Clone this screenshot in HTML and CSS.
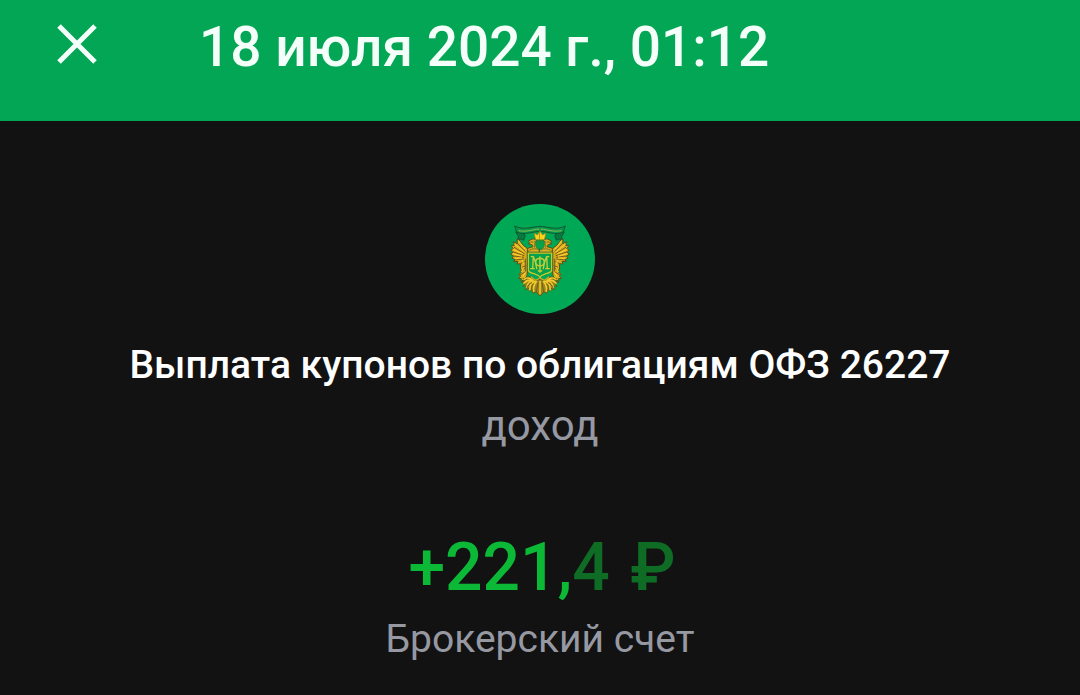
FILE: index.html
```html
<!DOCTYPE html>
<html lang="ru">
<head>
<meta charset="utf-8">
<meta name="viewport" content="width=device-width, initial-scale=1">
<title>Выплата купонов</title>
<link rel="stylesheet" href="styles.css">
</head>
<body>
<header class="topbar">
  <button class="close" type="button" aria-label="Закрыть">
    <svg class="close-icon" viewBox="0 0 40 40" aria-hidden="true"><path d="M2 2 38 38M38 2 2 38"/></svg>
  </button>
  <h1 class="topbar-title">18 июля 2024 г., 01:12</h1>
</header>
<main class="operation">
  <svg class="emblem" viewBox="15 12 330 330" role="img" aria-label="Герб">
    <circle cx="180" cy="177" r="165" fill="#00a855"/>
    <defs>
      <g id="half" stroke-linejoin="round" stroke-linecap="round">
        <path d="M108 96l14 0 14 10-5 15-9-4-11 6 4-12z" fill="#087a3f" stroke="#0a5931" stroke-width="3"/>
        <path d="M181 79C157 79 131 92 104 78l6 18c25 12 46-3 71-1" fill="#07964c" stroke="#0f5a30" stroke-width="3"/>
        <path d="M117 92c23 5 40-4 63-5" fill="none" stroke="#78b84e" stroke-width="4" stroke-dasharray="4 4"/>
        <path d="M144 155c1-10-5-13-14-18l-13-18-6-1 1 13-12-6 3 11-9 1 6 10-8 3 7 8-7 4 9 7-6 6 11 3-5 7 13-1-3 8 11-1-1 13 4 12-8 7 5 5-7 7 9 1-1 9 7-5 8-6 3-8z" fill="#d9ad20" stroke="#5c5318" stroke-width="3"/>
        <path d="M113 131l22 23M103 142l30 19M97 155l35 12M100 168l31 4M107 180l23-3M136 177v36M122 191l11-6M122 213l14-10M119 226l14-9M128 201l10-4" fill="none" stroke="#7b5c19" stroke-width="3"/>
        <path d="M116 124l19 23M104 133l28 22M99 148l28 13M99 161l26 7M105 175l20-1M128 182l2 10M131 203l-6 12M135 219l-6 10" fill="none" stroke="#ffd52d" stroke-width="3"/>
        <path d="M181 158h-37l-1-13 16-5c0-6-5-8-15-8l6-4-5-5 12-6c12-1 17 8 15 18-1 8 3 10 9 11z" fill="#d6b126" stroke="#555319" stroke-width="3"/>
        <path d="M153 126h6M149 150c8-5 18-4 29-2M165 124l-1 18" fill="none" stroke="#806b20" stroke-width="3"/>
        <path d="M181 119h-14l-5-20 10 6 8-12z" fill="#ffd21b" stroke="#8d831b" stroke-width="2"/>
        <path d="M181 123h-14v12c1 9 7 14 14 16" fill="#05a34c" stroke="#497523" stroke-width="2"/>
        <path d="M181 159h-36v51c0 8 14 10 22 13 7 2 11 5 14 9" fill="#05a34c" stroke="#d0c52a" stroke-width="4"/>
        <path d="M181 156h-40v55" fill="none" stroke="#3d651e" stroke-width="2"/>
        <path d="M154 170h6l-2 36m-6 0h11M160 170c6 11 9 25 10 36M180 176c-17-4-17 22 0 22M180 171v45l-5-4" fill="none" stroke="#c9cd38" stroke-width="4"/>
        <path d="M149 229l-9 8-11-1 5 7-9 4 11 4-7 8 11-1-3 11 11-4 0 9 10-6 1 12 10-5 5 8 7 4V236l-9 5-15-3z" fill="#9b8420" stroke="#5c5c19" stroke-width="3"/>
        <g fill="none" stroke="#f2c82b" stroke-width="5">
          <path d="M157 240c-8-7-18-7-25-2M158 241c-12-2-22 4-26 9M160 243c-12 1-18 10-20 19M164 244c-10 4-15 15-15 25M169 245c-7 8-10 19-8 29M180 244v38"/>
        </g>
        <path d="M155 248c-8 3-12 9-14 16M159 253c-4 6-5 11-4 18M174 248l-5 29" fill="none" stroke="#6c641a" stroke-width="3"/>
        <path d="M154 231l12 10 15-7" fill="none" stroke="#c9ae29" stroke-width="4"/>
      </g>
    </defs>
    <use href="#half"/>
    <use href="#half" transform="matrix(-1 0 0 1 360 0)"/>
  </svg>
  <h2 class="name">Выплата купонов по облигациям ОФЗ 26227</h2>
  <p class="kind">доход</p>
  <p class="amount">+221,<span class="amount-minor">4 <span class="currency">₽</span></span></p>
  <p class="account">Брокерский счет</p>
</main>
</body>
</html>
```
FILE: styles.css
```css
* {
  box-sizing: border-box;
}

body {
  margin: 0;
  background: #121212;
  color: #fff;
  font-family: Roboto, "Noto Sans", sans-serif;
}

h1, h2, p {
  margin: 0;
}

.topbar {
  display: flex;
  align-items: flex-start;
  gap: 89px;
  padding: 11px 44px 38px;
  background: #02a654;
}

.close {
  display: flex;
  padding: 13px;
  border: 0;
  background: none;
  color: #f3fff8;
}

.close-icon {
  width: 40px;
  height: 40px;
  fill: none;
  stroke: currentColor;
  stroke-width: 5;
}

.topbar-title {
  color: #f3fff8;
  font-size: 55px;
  font-weight: 500;
  line-height: 72px;
}

.operation {
  display: flex;
  flex-direction: column;
  align-items: center;
  padding: 83px 24px 32px;
  text-align: center;
}

.emblem {
  width: 110px;
  height: 110px;
}

.name {
  margin-top: 27px;
  font-size: 39px;
  font-weight: 500;
  line-height: 48px;
}

.kind,
.account {
  color: #9698a2;
  font-size: 39px;
  line-height: 48px;
}

.kind {
  margin-top: 13px;
  font-size: 42px;
}

.amount {
  margin-top: 78px;
  padding-left: 4px;
  color: #0bb936;
  font-size: 66px;
  font-weight: 500;
  line-height: 80px;
}

.amount-minor {
  color: #0e6c25;
}

.currency {
  margin-left: 4px;
}

.account {
  margin-top: 7px;
}
```
